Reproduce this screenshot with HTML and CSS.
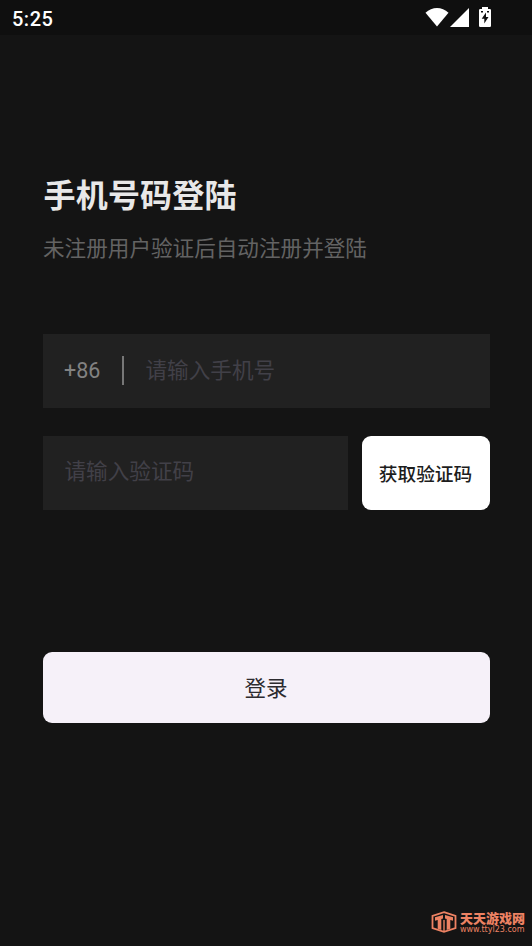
FILE: index.html
```html
<!DOCTYPE html>
<html lang="zh-CN">
<head>
<meta charset="utf-8">
<title>手机号码登陆</title>
<link rel="stylesheet" href="styles.css">
</head>
<body>
<div class="screen">
  <header class="status-bar">
    <span class="clock">5:25</span>
    <div class="status-icons">
      <svg class="wifi" width="24" height="20" viewBox="0 0 24 20"><path d="M12 19.500.5 5.800C7-.6 17-.6 23.500 5.800Z"/></svg>
      <svg class="signal" width="20" height="20" viewBox="0 0 20 20"><path d="M19 0v19H0Z"/></svg>
      <svg class="battery" width="14" height="22" viewBox="0 0 14 22"><path fill-rule="evenodd" d="M4 1h6v2h1.800Q13 3 13 4.200v15.600Q13 21 11.800 21H2.200Q1 21 1 19.800V4.200Q1 3 2.200 3H4ZM8 6.500 3.700 12.800H6.300V17.500L10.500 11H8ZM3 5h2v1.500H3ZM9 5h2v1.500H9Z"/></svg>
    </div>
  </header>
  <main class="login">
    <h1 class="title">手机号码登陆</h1>
    <p class="subtitle">未注册用户验证后自动注册并登陆</p>
    <form class="form">
      <div class="field phone">
        <span class="prefix">+86</span>
        <span class="divider"></span>
        <span class="placeholder">请输入手机号</span>
      </div>
      <div class="code-row">
        <div class="field code"><span class="placeholder">请输入验证码</span></div>
        <button class="get-code" type="button">获取验证码</button>
      </div>
      <button class="submit" type="button">登录</button>
    </form>
  </main>
  <footer class="watermark">
    <svg width="26" height="22" viewBox="0 0 26 22">
      <path class="outline" d="M13 1.200 24.500 5v12L13 20.800 1.500 17V5Z"/>
      <path class="mark" d="M4 6.300 12 4V7.500L10.300 8V19L6.700 17.800V8.900L4 9.700ZM14 4 22 6.300V9.700L19.300 8.900V17.800L15.700 19V8L14 7.500ZM12.300 9h1.400v11h-1.400Z"/>
    </svg>
    <div class="brand">
      <span class="brand-name">天天游戏网</span>
      <span class="brand-url">www.ttyl23.com</span>
    </div>
  </footer>
</div>
</body>
</html>
```
FILE: styles.css
```css
* { box-sizing: border-box; }

body {
  margin: 0;
  background: #141414;
  font-family: Roboto, "Noto Sans CJK SC", sans-serif;
}

.screen {
  display: flex;
  flex-direction: column;
  width: 532px;
  height: 946px;
  overflow: hidden;
}

.status-bar {
  display: flex;
  justify-content: space-between;
  height: 35px;
  padding: 0 40.500px 0 12px;
  background: #0f0f0f;
  color: #fff;
}

.clock {
  padding-top: 1px;
  font-size: 20px;
  font-weight: 500;
  line-height: 36px;
  letter-spacing: 0.5px;
}

.status-icons {
  display: flex;
  align-items: flex-start;
  padding-top: 7px;
  fill: #fff;
}

.signal { margin: 1px 8px 0 1px; }
.battery { margin-top: -1px; }

.login {
  flex: 1;
  padding: 138px 42.500px 0;
}

.title {
  margin: 0;
  padding-left: 1px;
  color: #e8e8e8;
  font-size: 32px;
  font-weight: 700;
  line-height: 46px;
  letter-spacing: 0.200px;
}

.subtitle {
  margin: 15px 0 0;
  padding-left: 0.500px;
  color: #636363;
  font-size: 21.600px;
  font-weight: 400;
  line-height: 30px;
}

.form { margin-top: 69.500px; }

.field {
  display: flex;
  align-items: center;
  height: 74px;
  background: #212121;
}

.phone { padding-left: 21.500px; }

.prefix {
  width: 58px;
  padding-bottom: 1px;
  color: #828282;
  font-size: 21.500px;
}

.divider {
  width: 1.500px;
  height: 29px;
  margin-right: 22px;
  background: #777;
}

.placeholder {
  color: #414048;
  font-size: 21.600px;
  font-weight: 400;
  line-height: 30px;
}

.phone .placeholder { padding-top: 1px; }

.code-row {
  display: flex;
  gap: 14px;
  margin-top: 28px;
}

.code {
  flex: 1;
  padding: 0 0 2px 22px;
}

.get-code,
.submit {
  padding: 0 0 1px;
  border: 0;
  border-radius: 9px;
  font-family: inherit;
}

.get-code {
  width: 128px;
  height: 74px;
  background: #fff;
  color: #1d1d1d;
  font-size: 18.700px;
  font-weight: 500;
}

.submit {
  display: block;
  width: 100%;
  height: 71px;
  margin-top: 142px;
  background: #f6f1f9;
  color: #2d2b2f;
  font-size: 21.500px;
}

.watermark {
  display: flex;
  align-self: flex-end;
  gap: 3px;
  height: 35px;
  margin-right: 7px;
  color: #ed8263;
}

.outline { fill: none; stroke: currentColor; stroke-width: 1.800; }
.mark { fill: currentColor; }

.brand {
  display: flex;
  flex-direction: column;
  width: 65px;
}

.brand-name {
  font-size: 13px;
  font-weight: 900;
  line-height: 15px;
  white-space: nowrap;
}

.brand-url {
  font-family: "DejaVu Sans", sans-serif;
  font-size: 8px;
  line-height: 8px;
  white-space: nowrap;
}
```
